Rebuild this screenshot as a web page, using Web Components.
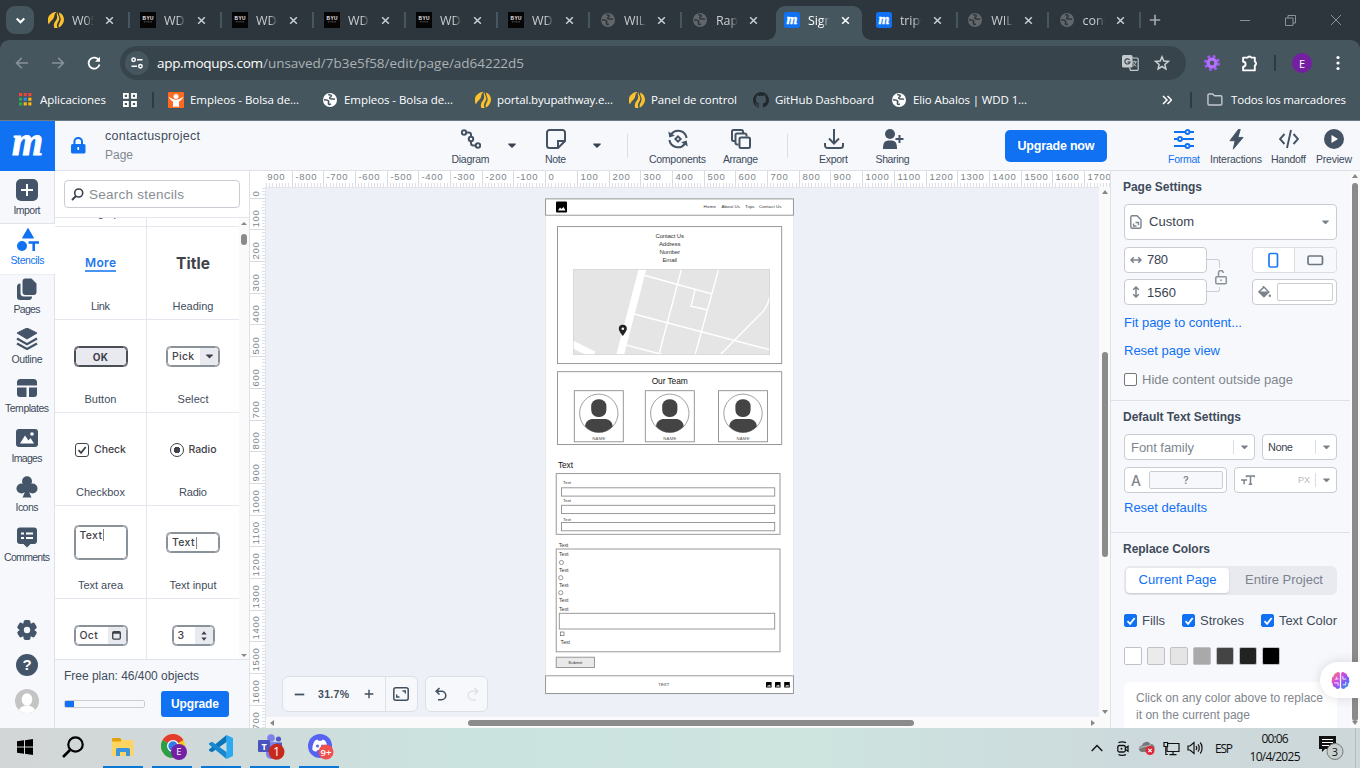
<!DOCTYPE html>
<html lang="es">
<head>
<meta charset="utf-8">
<title>contactusproject</title>
<style>
html,body{margin:0;height:100%;overflow:hidden}
body{font-family:"Liberation Sans",Arial,sans-serif;color:#3f4d5c}
</style>
</head>
<body>
<desktop-view></desktop-view>
<script>
const define = (name, css, html) => customElements.define(name, class extends HTMLElement {
  connectedCallback() {
    if (this.shadowRoot) return;
    const t = document.createElement('template');
    t.innerHTML = `<style>*{box-sizing:border-box}${css}</style>` + (typeof html === 'function' ? html(this) : html);
    this.attachShadow({mode: 'open'}).append(t.content.cloneNode(true));
  }
});
const at = (el, n, d = '') => el.getAttribute(n) ?? d;

/* Single-line label; "w" sets its width by letter spacing. */
customElements.define('ui-label', class extends HTMLElement {
  connectedCallback() {
    if (this.shadowRoot) return;
    this.attachShadow({mode: 'open'}).innerHTML = '<style>:host{display:inline-block;white-space:nowrap;flex:none}</style><slot></slot>';
    const w = +this.getAttribute('w');
    if (w) queueMicrotask(() => {
      const cur = this.getBoundingClientRect().width, n = this.textContent.length;
      const ls = (w - cur) / Math.max(1, n - 1);
      this.style.letterSpacing = ls + 'px';
      this.style.marginRight = -ls + 'px';
    });
  }
});

const S = 'fill="none" stroke="currentColor"';
const icons = {
  chevdown: ['0 0 12 12', `<path d="M2.5 4.2L6 7.7l3.500-3.500" ${S} stroke-width="1.900"/>`],
  close: ['0 0 10 10', `<path d="M1.300 1.300l7.400 7.400M8.700 1.300L1.300 8.700" ${S} stroke-width="1.700"/>`],
  plus: ['0 0 12 12', `<path d="M6 .8v10.400M.8 6h10.400" ${S} stroke-width="1.700"/>`],
  minus: ['0 0 12 12', `<path d="M.8 6h10.400" ${S} stroke-width="1.900"/>`],
  path: ['0 0 16 16', `<path d="M1 12.500A8 8 0 0 1 3.500 1.500C5 .3 7 0 8.800 0 5.500 2 7 4.500 5 7 3.500 9 1.500 10 1 12.500z" fill="#fdc12c"/><path d="M9.800 0C7.300 2.500 10.500 4 8.500 7.500 7 10 5 11.500 6.300 16h3.400C7.500 12 11 9.500 11.300 7 11.700 4 8.800 2.500 9.800 0z" fill="#fdc12c"/><path d="M11.200.6c4 1.500 5.300 5.700 4.600 8.700-.6 3-2.800 5-4.800 6.200-1.700-3 1.700-5 1.700-8.200 0-2.500-2-4-1.500-6.700z" fill="#fdc12c"/>`],
  byu: ['0 0 16 16', `<rect width="16" height="16" fill="#050505"/><path d="M4 9.800h8" stroke="#666" stroke-width=".9" stroke-dasharray="1 .4"/><text x="8" y="8" font-family="Liberation Sans" font-weight="700" font-size="4.800" fill="#eee" text-anchor="middle" textLength="11">BYU</text>`],
  globe: ['0 0 16 16', `<circle cx="8" cy="8" r="7" fill="currentColor"/><path d="M6.200 2.500c1 .3 2.800.2 3.200 1.200.3 1-1.400 1.300-1.700 2.200-.2.900 1.200.9 2 1.100 1.100.3 2.300-.4 3.300.4" fill="none" stroke="var(--hole,#2d363c)" stroke-width="1.500"/><path d="M2 7.700c1.500 0 3.800.2 4.600 1.500.6 1-.6 1.800-.1 2.700.4.800 1.500.6 2.400.2" fill="none" stroke="var(--hole,#2d363c)" stroke-width="1.600"/>`],
  moq: ['0 0 16 16', `<rect width="16" height="16" rx="2.500" fill="#1071f2"/><text x="8" y="11.800" font-family="Liberation Serif" font-style="italic" font-weight="700" font-size="14" fill="#fff" stroke="#fff" stroke-width=".4" text-anchor="middle">m</text>`],
  back: ['0 0 14 14', `<path d="M13 7H1.800M6.800 1.800L1.600 7l5.200 5.200" ${S} stroke-width="1.600"/>`],
  fwd: ['0 0 14 14', `<path d="M1 7h11.200M7.200 1.800L12.400 7l-5.200 5.200" ${S} stroke-width="1.600"/>`],
  reload: ['0 0 14 14', `<path d="M12 4.500A5.500 5.500 0 1 0 12.500 8.500" ${S} stroke-width="1.800"/><path d="M13 .8v5H8z" fill="currentColor"/>`],
  tune: ['0 0 14 14', `<g ${S} stroke-width="1.500"><circle cx="3.600" cy="3.800" r="1.700"/><path d="M7 3.800h5.500M1.500 10.200H7"/><circle cx="10.400" cy="10.200" r="1.700"/></g>`],
  translate: ['0 0 17 16', `<rect x="0" y="0" width="10.500" height="12.500" rx="1.500" fill="#c4c9cc"/><path d="M7.600 4.900A2.600 2.600 0 1 0 8 7H5.500" fill="none" stroke="#38444b" stroke-width="1.200"/><path d="M10 3h5a1.200 1.200 0 0 1 1.200 1.200v10a1.200 1.200 0 0 1-1.200 1.200H8.500L7.500 12.500" fill="none" stroke="#c4c9cc" stroke-width="1.200"/><path d="M9.800 6.800h5M12.300 5.600v1.200M13.800 7c-.4 2-1.800 3.700-3.300 4.500M10.800 7.500c.6 1.700 1.900 3 3.600 3.800" fill="none" stroke="#c4c9cc" stroke-width=".9"/>`],
  star: ['0 0 16 16', `<path d="M8 1.800l1.800 4.200 4.500.4-3.400 3 1 4.500L8 11.500l-3.900 2.400 1-4.500-3.400-3 4.500-.4z" ${S} stroke-width="1.500"/>`],
  purple: ['0 0 16 16', `<circle cx="8" cy="8" r="6.500" fill="none" stroke="#a259f5" stroke-width="3" stroke-dasharray="2.600 2.505"/><circle cx="8" cy="8" r="3.900" fill="none" stroke="#b370fa" stroke-width="3.200"/>`],
  puzzle: ['0 0 16 16', `<path d="M2 2.500h4.200a2 1.800 0 0 1 3.600 0H13v3.800a1.800 1.900 0 0 1 0 3.600v4.600H2v-3.600a2.300 2.300 0 0 0 0-4.600z" ${S} stroke-width="1.800" stroke-linejoin="round"/>`],
  dots: ['0 0 4 16', `<g fill="currentColor"><circle cx="2" cy="2.500" r="1.600"/><circle cx="2" cy="8" r="1.600"/><circle cx="2" cy="13.500" r="1.600"/></g>`],
  apps: ['0 0 14 14', ['#f0463a','#f0463a','#f0463a','#2da94f','#2d8cf0','#f9b90e','#2da94f','#f9b90e','#f9b90e'].map((c,i)=>`<rect x="${i%3*5}" y="${(i/3|0)*5}" width="3.400" height="3.400" fill="${c}"/>`).join('')],
  squares: ['0 0 14 14', `<g ${S} stroke-width="1.800"><path d="M.9.9h4v4h-4zM9 .9h4v4H9zM.9 9h4v4h-4zM9 9h4v4H9z"/></g>`],
  orange: ['0 0 16 16', `<rect width="16" height="16" rx="1" fill="#ff6a22"/><circle cx="8" cy="4.600" r="2.500" fill="#fff"/><path d="M.8 4.500C3 6 5 7.800 8 7.800s5-1.800 7.200-3.300c-.6 2.500-2.500 4-4.200 5V15c-2-.8-4-.8-6 0V9.500C3.300 8.500 1.400 7 .8 4.500z" fill="#fff"/>`],
  github: ['0 0 16 16', `<path fill="#22292e" d="M8 0a8 8 0 0 0-2.500 15.600c.4.100.5-.2.500-.4v-1.400c-2.200.5-2.700-1-2.700-1-.4-.9-.9-1.200-.9-1.200-.7-.5.100-.5.100-.5.800.1 1.200.8 1.200.8.700 1.200 1.900.9 2.300.7.100-.5.300-.9.500-1.100-1.800-.2-3.600-.9-3.600-4 0-.9.300-1.600.8-2.100-.1-.2-.4-1 .1-2.100 0 0 .7-.2 2.200.8a7.500 7.500 0 0 1 4 0c1.500-1 2.200-.8 2.200-.8.400 1.100.1 1.900.1 2.100.5.600.8 1.300.8 2.100 0 3.100-1.900 3.800-3.700 4 .3.200.6.700.6 1.500v2.200c0 .2.100.5.500.4A8 8 0 0 0 8 0z"/>`],
  dbl: ['0 0 10 10', `<path d="M1 1l4 4-4 4M5.500 1l4 4-4 4" ${S} stroke-width="1.500"/>`],
  folder: ['0 0 17 14', `<path d="M1 2.500C1 1.700 1.500 1 2.300 1H6l2 2h6.500c.8 0 1.300.6 1.300 1.300v7c0 .8-.5 1.400-1.300 1.400H2.300C1.500 12.700 1 12.100 1 11.300z" fill="none" stroke="#c3c9cd" stroke-width="1.500"/>`],
  lock: ['0 0 15 17', `<rect x="0" y="7" width="14.500" height="9.500" rx="1.500" fill="#1071f2"/><path d="M3.400 7.500V4.500a3.800 3.600 0 0 1 7.600 0v3" fill="none" stroke="#1071f2" stroke-width="2"/><rect x="6.400" y="10" width="1.700" height="3" fill="#fff"/>`],
  search: ['0 0 13 13', `<circle cx="7.700" cy="5" r="4" ${S} stroke-width="1.600"/><path d="M5 8L1 12" ${S} stroke-width="2"/>`],
  import: ['0 0 22 22', `<rect width="22" height="22" rx="5" fill="currentColor"/><path d="M11 5v12M5 11h12" stroke="#fff" stroke-width="2"/>`],
  stencils: ['0 0 22 24', `<path d="M11 .5l5.500 9.500h-11z" fill="currentColor" stroke="currentColor" stroke-linejoin="round"/><circle cx="5" cy="18" r="5" fill="currentColor"/><path d="M11.500 14.500H22M16.700 14.500V23" ${S} stroke-width="2.600"/>`],
  pages: ['0 0 22 22', `<path d="M4.500 5.500v9.500a3.500 3.500 0 0 0 3.500 3.500h8c0 2-1 3.500-3 3.500H4a3 3 0 0 1-3-3V8.500a3 3 0 0 1 3.500-3z" fill="currentColor"/><path d="M9.500.5h6l5 5V14a3 3 0 0 1-3 3h-8a3 3 0 0 1-3-3V3.500a3 3 0 0 1 3-3z" fill="currentColor"/>`],
  outline: ['0 0 22 22', `<path d="M11 0l10 5-10 6L1 5z" fill="currentColor" stroke="currentColor" stroke-linejoin="round"/><path d="M1 10.500l10 5.700 10-5.700M1 15.500l10 5.500 10-5.500" ${S} stroke-width="2.300"/>`],
  templates: ['0 0 22 22', `<path d="M1 8.500V4.500a3 3 0 0 1 3-2.500h14a3 3 0 0 1 3 2.500v4zM1 10.500h9.500V20H4a3 3 0 0 1-3-3zM13 10.500h8V17a3 3 0 0 1-3 3h-5z" fill="currentColor"/>`],
  images: ['0 0 22 22', `<rect y="2" width="22" height="18" rx="3" fill="currentColor"/><path d="M4 16.500l5-8 3.500 5 2-2.500 3.500 5.500z" fill="#fff"/><circle cx="16" cy="7" r="1.800" fill="#fff"/>`],
  icons: ['0 0 22 22', `<g fill="currentColor"><circle cx="11" cy="5.200" r="5"/><circle cx="5.500" cy="12.500" r="5"/><circle cx="16.500" cy="12.500" r="5"/><path d="M9 10h4l.5 7 2 4.500h-9l2-4.500z"/></g>`],
  comments: ['0 0 22 22', `<path d="M4 1.500h14a3 3 0 0 1 3 3v10.500a3 3 0 0 1-3 3h-3.500L11 21.500 7.500 18H4a3 3 0 0 1-3-3V4.500a3 3 0 0 1 3-3z" fill="currentColor"/><path d="M5 7.500h3M10 7.500h7M5 12h3M10 12h7" stroke="#fff" stroke-width="2"/>`],
  gear: ['0 0 22 22', `<g fill="currentColor"><circle cx="11" cy="11" r="7.500"/><rect x="7.500" y="1" width="7" height="20" rx="2"/><rect x="7.500" y="1" width="7" height="20" rx="2" transform="rotate(60 11 11)"/><rect x="7.500" y="1" width="7" height="20" rx="2" transform="rotate(120 11 11)"/></g><circle cx="11" cy="11" r="3.200" fill="#f7f8fb"/>`],
  avatar: ['0 0 24 24', `<clipPath id="c"><circle cx="12" cy="12" r="12"/></clipPath><g clip-path="url(#c)"><rect width="24" height="24" fill="#c4c4c4"/><ellipse cx="12" cy="10.500" rx="5.300" ry="6.300" fill="#fff"/><ellipse cx="12" cy="22" rx="8" ry="5.500" fill="#fff"/></g>`],
  diagram: ['0 0 20 20', `<g ${S} stroke-width="2"><circle cx="3" cy="3.500" r="2.200"/><circle cx="10" cy="10" r="2.200"/><circle cx="17" cy="16.500" r="2.200"/><path d="M5.500 3.500h2c1.700 0 2.500 1 2.500 2.300v2M10 12.200v2c0 1.500 1 2.300 2.500 2.300h2"/></g>`],
  note: ['0 0 20 20', `<path d="M3.500 1h13A2.500 2.500 0 0 1 19 3.500V12l-7 7H3.500A2.500 2.500 0 0 1 1 16.500v-13A2.500 2.500 0 0 1 3.500 1zM12 18.500V12h6.500" ${S} stroke-width="2"/>`],
  caret: ['0 0 8 5', `<path d="M.3.500h7.400v1L4 5 .3 1.500z" fill="currentColor"/>`],
  components: ['0 0 20 20', `<path d="M3.200 5.200A8.600 8.600 0 0 1 18.600 9M16.800 14.800A8.600 8.600 0 0 1 1.400 11" ${S} stroke-width="2"/><path d="M.3 2.500l1 6 5.500-1.800zM19.700 17.500l-1-6-5.500 1.800z" fill="currentColor"/><path d="M10 7.300l2.700 2.700-2.700 2.700L7.300 10z" ${S} stroke-width="1.900"/>`],
  arrange: ['0 0 20 20', `<g ${S} stroke-width="2"><path d="M4 12H2.500A1.500 1.500 0 0 1 1 10.500v-8A1.500 1.500 0 0 1 2.500 1h8A1.500 1.500 0 0 1 12 2.500V4M7.500 15.500H6A1.500 1.500 0 0 1 4.500 14V6A1.500 1.500 0 0 1 6 4.500h8A1.500 1.500 0 0 1 15.500 6v1.500"/><rect x="8.500" y="8.500" width="10.500" height="10.500" rx="1.500"/></g>`],
  export: ['0 0 20 20', `<path d="M10 0v14M5 9.500l5 5 5-5M1 14v2.500A2.500 2.500 0 0 0 3.500 19h13a2.500 2.500 0 0 0 2.500-2.500V14" ${S} stroke-width="2"/>`],
  sharing: ['0 0 22 20', `<g fill="currentColor"><circle cx="8" cy="5" r="5"/><path d="M1 20c0-6 1-8.500 7-8.500S15 14 15 20z"/></g><path d="M17.500 6v8M13.500 10h8" ${S} stroke-width="2"/>`],
  format: ['0 0 20 20', `<g ${S} stroke-width="1.900"><path d="M0 3h11M16 3h4M0 10h3.500M8.500 10H20M0 17h11M16 17h4"/><circle cx="13.500" cy="3" r="2"/><circle cx="6" cy="10" r="2"/><circle cx="13.500" cy="17" r="2"/></g>`],
  bolt: ['0 0 16 22', `<path d="M10 .5L1 12.500h5.500L4.500 21.500 15 9H9.500L12 .5z" fill="currentColor" stroke="currentColor" stroke-linejoin="round"/>`],
  handoff: ['0 0 20 20', `<path d="M5.500 5L1 10l4.500 5M14.500 5l4.500 5-4.500 5M12 1L8 19" ${S} stroke-width="1.900"/>`],
  preview: ['0 0 20 20', `<circle cx="10" cy="10" r="10" fill="currentColor"/><path d="M7.500 6l6.500 4-6.500 4z" fill="#fff"/>`],
  pagesz: ['0 0 12 14', `<path d="M2.300.8h4.700l4 4v6.900c0 .8-.6 1.500-1.500 1.500H2.300C1.500 13.200.8 12.500.8 11.700v-9.400C.8 1.500 1.500.8 2.300.8z" ${S} stroke-width="1.400"/><path d="M5.500 7.500H8.500v2.700M6.500 11H3.500V8.500" ${S} stroke-width="1.300"/>`],
  hor: ['0 0 12 8', `<path d="M1 4h10M3.800 1.200L1 4l2.800 2.800M8.200 1.200L11 4 8.200 6.800" ${S} stroke-width="1.500"/>`],
  ver: ['0 0 8 12', `<path d="M4 1v10M1.200 3.700L4 1l2.800 2.700M1.200 8.300L4 11l2.800-2.700" ${S} stroke-width="1.500"/>`],
  unlock: ['0 0 14 15', `<rect x="1.800" y="6.700" width="10.500" height="7" rx="1" ${S} stroke-width="1.500"/><path d="M4.500 6.500V3.500a2 2.300 0 0 1 4.800-.5M7 9.500v1.500" ${S} stroke-width="1.500"/>`],
  bucket: ['0 0 12 11', `<path d="M5 .5l5 5-4.500 4.500L.8 5.500 5 1.500zM2 5.800h6.500" fill="none" stroke="currentColor" stroke-width="1.300"/><path d="M1.500 6h8l-4 4z" fill="currentColor"/><circle cx="10.900" cy="9" r="1.100" fill="currentColor"/>`],
  tt: ['0 0 14 10', `<path d="M5.500 2.200V.9h8v1.300M9.500 1v8.200M7.800 9.300h3.400M.8 5.800V4.900h4.600v.9M3.100 5v4.300" ${S} stroke-width="1.500"/>`],
  brain: ['0 0 20 20', `<linearGradient id="g" x1="0" y1="0" x2="1" y2="1"><stop offset="0" stop-color="#ff8a3c"/><stop offset=".35" stop-color="#d94bdc"/><stop offset=".65" stop-color="#7b5cf5"/><stop offset="1" stop-color="#22aef5"/></linearGradient><path fill="url(#g)" d="M9.300 2v16c-1.800 1.500-4 .9-4.700-.8-2-.2-3.200-2-2.700-3.800C.6 12.500.3 10.800 1 9.500.5 7.500 1.400 6 2.800 5.500 3 3.500 4 2.300 5.600 2 6.500.7 8.500.8 9.300 2zM10.700 2v16c1.800 1.500 4 .9 4.700-.8 2-.2 3.200-2 2.700-3.800 1.300-.9 1.600-2.600.9-3.900.5-2-.4-3.500-1.800-4C17 3.500 16 2.300 14.400 2c-.9-1.300-2.900-1.200-3.700 0z"/><path d="M4 8.500h4M6 6v2.500M3.500 12.500h4v3M12.500 5.500v3h3.500M12.500 14.500h3v-3" fill="none" stroke="#fff" stroke-width=".9"/>`],
  fit: ['0 0 16 14', `<rect x=".8" y=".8" width="14.400" height="12.400" rx="2" ${S} stroke-width="1.500"/><path d="M9.500 4h2.800v2.500M3.700 7.500V10h2.800" ${S} stroke-width="1.400"/>`],
  undo: ['0 0 12 14', `<path d="M4.500 1L1.200 4.200l3.300 3.300M1.500 4.200h5a4.300 4.300 0 0 1 0 8.600H3" ${S} stroke-width="1.600"/>`],
  redo: ['0 0 12 14', `<path d="M7.500 1l3.300 3.200-3.300 3.300M10.500 4.200h-5a4.300 4.300 0 0 0 0 8.600H9" ${S} stroke-width="1.300"/>`],
  win: ['0 0 16 16', `<path d="M0 2.300L7 1.300v6.200H0zM8 1.200L16 0v7.500H8zM0 8.500h7v6.200l-7-1zM8 8.500h8V16l-8-1.200z"/>`],
  wsearch: ['0 0 22 22', `<circle cx="13.500" cy="8.500" r="7.200" fill="none" stroke="#000" stroke-width="2.200"/><path d="M8 14L1 21" stroke="#000" stroke-width="2.600"/>`],
  files: ['0 0 22 18', `<path d="M0 1.500C0 .6.600 0 1.500 0H8l1.500 2H20a1.500 1.500 0 0 1 1.500 1.500V18H0z" fill="#fcd462"/><path d="M0 1.500C0 .6.600 0 1.500 0H8l1.500 1.700-1 1.800H0z" fill="#e0a008"/><path d="M4 18v-6.500A1.500 1.500 0 0 1 5.500 10h11a1.500 1.500 0 0 1 1.500 1.500V18h-4v-4H8v4z" fill="#3a95dd"/>`],
  chrome: ['0 0 26 26', `<circle cx="12" cy="12" r="12" fill="#f9c81e"/><path d="M12 12L1.600 6A12 12 0 0 1 22.400 6z" fill="#e33b2e"/><path d="M12 12l-10.400-6A12 12 0 0 0 12 24l5-9z" fill="#2a9e49"/><circle cx="12" cy="12" r="6" fill="#fff"/><circle cx="12" cy="12" r="4.700" fill="#2f7de9"/><circle cx="18" cy="18" r="8" fill="#751fa5"/><text x="18" y="21.300" font-size="9.500" font-family="Open Sans" text-anchor="middle" fill="#fff">E</text>`],
  vscode: ['0 0 24 24', `<path d="M17.500 0L24 3v18l-6.500 3z" fill="#29aaf2"/><path d="M17.500 0v7L3 17.300 0 15.700v-1.200z" fill="#0b73b8"/><path d="M0 8.300L3 6.700 17.500 17v7L0 9.500z" fill="#1588cf"/>`],
  teams: ['0 0 27 26', `<circle cx="13" cy="4" r="3.800" fill="#7b83eb"/><circle cx="20.500" cy="5" r="2.600" fill="#5059c9"/><path d="M8 8h10v12a5 5 0 0 1-10 0z" fill="#7b83eb"/><path d="M18 8.500h6V16l-6 4z" fill="#5059c9"/><rect y="6" width="12" height="12" rx="1" fill="#4b53bc"/><text x="6" y="15.500" font-size="9" font-weight="700" font-family="Open Sans" text-anchor="middle" fill="#fff">T</text><circle cx="18.500" cy="17.800" r="8" fill="#c8291d"/><text x="18.500" y="22.300" font-size="12.500" font-family="Open Sans" text-anchor="middle" fill="#fff">1</text>`],
  discord: ['0 0 26 26', `<circle cx="12" cy="12" r="12" fill="#5662f0"/><path d="M7 6.500l2.500-1 .8 1.200h3.400l.8-1.200 2.500 1c2 3 3 6.500 2.500 9.500-1.500 1-2.500 1.500-4 1.500l-1-1.500h-5l-1 1.500c-1.500 0-2.500-.5-4-1.500C4 13 5 9.500 7 6.500z" fill="#fff"/><circle cx="9.500" cy="12" r="1.500" fill="#5662f0"/><circle cx="14.500" cy="12" r="1.500" fill="#5662f0"/><circle cx="18" cy="18" r="7.500" fill="#f0504f"/><text x="18" y="21.500" font-size="9.500" font-weight="600" font-family="Open Sans" text-anchor="middle" fill="#fff">9+</text>`],
  up: ['0 0 12 8', `<path d="M.7 7L6 1.500 11.300 7" fill="none" stroke="#111" stroke-width="1.400"/>`],
  cam: ['0 0 12 15', `<g fill="none" stroke="#111" stroke-width="1.300"><rect x=".8" y="4.500" width="7.500" height="6.500" rx="1.500"/><path d="M8.500 7l2.500-1.700v5L8.500 8.500M1.500 1.700C3 .6 7.500.6 9 1.700M1.500 13.500c1.500 1.100 6 1.100 7.500 0"/></g><circle cx="4.500" cy="7.700" r="1" fill="#111"/>`],
  cloud: ['0 0 17 14', `<path d="M3.500 11a3.300 3.300 0 0 1 .3-6.500A4.800 4.800 0 0 1 12.500 3a4 4 0 0 1 2 7.500z" fill="#777"/><path d="M.8 8C3 4 8 7 13 3.500" stroke="#aaa" stroke-width="1.500" fill="none"/><circle cx="12" cy="9.500" r="4.500" fill="#e02733"/><path d="M10.300 7.800l3.400 3.400M13.700 7.800l-3.400 3.400" stroke="#fff" stroke-width="1.200"/>`],
  net: ['0 0 17 15', `<g fill="none" stroke="#111" stroke-width="1.200"><path d="M5 2.500h11v8H4V6M10 10.500v3M6.500 13.700h7"/><path d="M1 1.500h3.600v4H1zM2.800 5.500v8h2"/></g>`],
  sound: ['0 0 17 14', `<g fill="none" stroke="#111" stroke-width="1.200"><path d="M1 5v4h2l4 3.500v-11L3 5zM9 5c.8 1 .8 3 0 4M11 3.300c1.700 2 1.700 5.400 0 7.400M13.200 1.500c2.500 3 2.500 8 0 11"/></g>`],
  notif: ['0 0 25 24', `<path d="M0 0h17v13H6l-3 3v-3H0z" fill="#111"/><path d="M3 3.500h11M3 6.500h11M3 9.500h7" stroke="#fff"/><circle cx="16" cy="15.500" r="8" fill="#c8cfcf" stroke="#777"/><text x="16" y="19.500" font-size="11" font-family="Open Sans" text-anchor="middle" fill="#111">3</text>`],
  cal: ['0 0 10 10', `<rect x=".8" y=".8" width="8.400" height="8.200" rx="1.200" ${S} stroke-width="1.500"/><path d="M1 2h8" ${S} stroke-width="2"/>`],
  spin: ['0 0 6 10', `<path d="M3 .3l2.700 3.200H.3zM3 9.700l2.700-3.200H.3z" fill="currentColor"/>`],
  check: ['0 0 10 10', `<path d="M1.500 5.200l2.600 2.600L8.700 2" ${S} stroke-width="1.800"/>`],
  min: ['0 0 10 10', `<path d="M0 5.500h10" ${S}/>`],
  restore: ['0 0 11 11', `<path d="M.5 3h7.500v7.500H.5zM3 3V.5h7.500V8H8" ${S}/>`],
  x2: ['0 0 10 10', `<path d="M0 0l10 10M10 0L0 10" ${S}/>`]
};
define('ui-icon', ':host{display:block;flex:none}svg{display:block}', el => {
  const [vb, body] = icons[at(el, 'name')], w = +at(el, 'w', 16), v = vb.split(' ');
  return `<svg width="${w}" height="${w * v[3] / v[2]}" viewBox="${vb}">${body}</svg>`;
});

/* ---------- browser frame ---------- */
define('browser-tab', `
:host{display:block;width:92px;height:34px;flex:none;color:#c9ced2;position:relative;font:12.500px "Open Sans",sans-serif}
.t{display:flex;align-items:center;height:34px;width:86px;padding:0 8px 6px 8px}
.n{width:22px;margin-left:8px;overflow:hidden;white-space:nowrap;letter-spacing:-.1px;-webkit-mask-image:linear-gradient(90deg,#000 60%,transparent)}
.x{margin-left:11px}
:host([sep])::after{content:"";position:absolute;left:88px;top:6px;width:2px;height:16px;background:#46575f}
:host([active]) .t{background:#45565f;border-radius:9px 9px 0 0;color:#fff}
:host([active]) .t::before,:host([active]) .t::after{content:"";position:absolute;bottom:0;width:9px;height:9px;left:-9px;background:radial-gradient(circle at 0 0,transparent 8.500px,#45565f 9px)}
:host([active]) .t::after{left:86px;background:radial-gradient(circle at 100% 0,transparent 8.500px,#45565f 9px)}
ui-icon[name=globe]{color:#62676b}
`, el => `<div class="t"><ui-icon name="${at(el,'icon')}"></ui-icon><span class="n"><slot></slot></span><ui-icon class="x" name="close" w="9"></ui-icon></div>`);

define('tab-strip', `
:host{display:flex;height:40px;padding:6px 0 0 6px;background:#2d363c;color:#d0d4d7}
.d{width:28px;height:28px;border-radius:9px;background:#45565f;display:grid;place-items:center;color:#fff;margin-right:6px}
.late{width:91.300px}
.p{margin:8px 0 0 7px;color:#a1a7ab}
.w{display:flex;margin-left:auto;color:#8b9196;padding:9px 19px 0 0;gap:35px}
`, `<div class="d"><ui-icon name="chevdown" w="13"></ui-icon></div>
<browser-tab icon="path" sep>W05 Assign</browser-tab><browser-tab icon="byu" sep>WDD 130</browser-tab><browser-tab icon="byu" sep>WDD 130</browser-tab><browser-tab icon="byu" sep>WDD 130</browser-tab><browser-tab icon="byu" sep>WDD 130</browser-tab><browser-tab icon="byu" sep>WDD 130</browser-tab><browser-tab icon="globe" sep>WILD</browser-tab><browser-tab icon="globe">Rapids</browser-tab><browser-tab icon="moq" active>Sign up</browser-tab><browser-tab class="late" icon="moq" sep>trips</browser-tab><browser-tab class="late" icon="globe" sep>WILD</browser-tab><browser-tab class="late" icon="globe" sep>contact</browser-tab>
<ui-icon class="p" name="plus" w="12"></ui-icon>
<div class="w"><ui-icon name="min" w="10"></ui-icon><ui-icon name="restore" w="11"></ui-icon><ui-icon name="x2" w="10"></ui-icon></div>`);

define('address-bar', `
:host{display:flex;align-items:center;height:46px;background:#45565f;padding-left:15px;color:#fff;font:13.500px "Open Sans",sans-serif;border-radius:9px 9px 0 0}
.o{display:flex;align-items:center;width:1066px;height:34px;border-radius:17px;background:#38444b;margin-left:19px;padding:0 16px 0 5px}
.i{width:24px;height:24px;border-radius:50%;background:#45565f;display:grid;place-items:center;margin-right:8px}
.u{color:#aab2b7}.tr{margin-left:auto}
.s{width:2px;height:16px;background:#2f3a41;margin:0 16px}
.e{width:20px;height:20px;border-radius:50%;background:#741fa2;font-size:11px;display:grid;place-items:center;margin-right:24px}
`, `<ui-icon name="back" w="14" style="color:#87929a"></ui-icon><ui-icon name="fwd" w="14" style="color:#87929a;margin-left:22px"></ui-icon><ui-icon name="reload" w="14" style="margin-left:22px"></ui-icon>
<div class="o"><div class="i"><ui-icon name="tune" w="14"></ui-icon></div><ui-label w="106">app.moqups.com</ui-label><ui-label class="u" w="261">/unsaved/7b3e5f58/edit/page/ad64222d5</ui-label>
<ui-icon class="tr" name="translate" w="17"></ui-icon><ui-icon name="star" w="16" style="margin-left:15px;color:#c9ced1"></ui-icon></div>
<ui-icon name="purple" w="16" style="margin-left:18px"></ui-icon><ui-icon name="puzzle" w="17" style="margin-left:21px"></ui-icon><div class="s"></div><div class="e">E</div><ui-icon name="dots" w="4"></ui-icon>`);

define('bookmark-item', `:host{display:flex;align-items:center;flex:none}ui-icon{margin-right:var(--gap,6px)}`, el => `<ui-icon name="${at(el,'icon')}" w="${at(el,'s','16')}"></ui-icon><ui-label w="${at(el,'w')}">${at(el,'label')}</ui-label>`);
define('bookmark-bar', `
:host{display:flex;align-items:center;height:35px;padding:0 0 7px 19px;background:#45565f;border-bottom:1px solid #6d7b84;color:#fff;font:11.500px "Open Sans",sans-serif;--hole:#45565f;box-sizing:border-box}
bookmark-item{margin-right:22px}.s{width:2px;height:16px;background:#2f3a41}
`, `<bookmark-item icon="apps" s="13" w="66" label="Aplicaciones" style="margin-right:17px;--gap:8px"></bookmark-item><ui-icon name="squares" w="14"></ui-icon><div class="s" style="margin:0 14px 0 15px"></div>
<bookmark-item icon="orange" w="109" label="Empleos - Bolsa de..." style="margin-right:23px"></bookmark-item><bookmark-item icon="globe" w="109" label="Empleos - Bolsa de..."></bookmark-item><bookmark-item icon="path" w="116" label="portal.byupathway.e..." style="margin-right:16px"></bookmark-item><bookmark-item icon="path" w="86" label="Panel de control" style="margin-right:16px"></bookmark-item><bookmark-item icon="github" w="99" label="GitHub Dashboard" style="margin-right:17px"></bookmark-item><bookmark-item icon="globe" w="114" label="Elio Abalos | WDD 1..."></bookmark-item>
<ui-icon name="dbl" w="10" style="margin-left:auto"></ui-icon><div class="s" style="margin:0 15px 0 18px"></div><bookmark-item icon="folder" w="115" label="Todos los marcadores" style="margin-right:14px;--gap:8px"></bookmark-item>`);

/* ---------- application header ---------- */
define('mq-tool', `
:host{display:flex;flex-direction:column;align-items:center;flex:none;height:49px;padding-top:8px;font-size:10.500px;line-height:13px;color:#3c4a5b}
.i{height:20px;display:grid;place-items:center;margin-bottom:4px;color:#445364}:host([active]),:host([active]) .i{color:#1071f2}
`, el => `<div class="i"><ui-icon name="${at(el,'icon')}" w="${at(el,'s','20')}"></ui-icon></div><ui-label w="${at(el,'w')}">${at(el,'label')}</ui-label>`);
define('mq-header', `
:host{display:flex;height:50px;background:#f7f8fb;border-bottom:1px solid #dfe0e8;box-sizing:border-box;padding-right:4px}
.logo{width:55px;height:50px;background:#1071f2;flex:none;text-align:center;color:#fff;font:italic 700 40px/42px "Liberation Serif",serif;-webkit-text-stroke:.9px #fff}
.l{margin:16px 19px 0 16px}
.n{width:335.500px;font-size:12.500px;line-height:19px;padding-top:6px}.n ui-label{display:block;width:max-content}
.pg{color:#7f8994;font-size:12px}
.c{margin-top:22px;color:#36424f}.sep{width:1px;height:24px;margin-top:13px;background:#dcdee5}
.b{width:102px;height:32px;border-radius:5px;background:#1071f2;color:#fff;font-weight:700;font-size:12.500px;line-height:14px;display:grid;place-items:center;margin:9px 52px 0 87.500px;padding-bottom:1px}
`, `<div class="logo">m</div><ui-icon class="l" name="lock" w="15"></ui-icon><div class="n"><ui-label w="95">contactusproject</ui-label><ui-label class="pg" w="28">Page</ui-label></div>
<mq-tool icon="diagram" label="Diagram" w="38" style="width:60px"></mq-tool><ui-icon class="c" name="caret" w="8" style="margin-left:7px"></ui-icon>
<mq-tool icon="note" label="Note" w="21" style="width:50px;margin-left:15px"></mq-tool><ui-icon class="c" name="caret" w="8" style="margin-left:12px"></ui-icon>
<div class="sep" style="margin-left:26px"></div><mq-tool icon="components" label="Components" w="57" style="width:64px;margin-left:18px"></mq-tool><mq-tool icon="arrange" label="Arrange" w="35" style="width:50px;margin-left:6px"></mq-tool>
<div class="sep" style="margin-left:21px"></div><mq-tool icon="export" label="Export" w="29" style="width:50px;margin-left:21px"></mq-tool><mq-tool icon="sharing" s="22" label="Sharing" w="34" style="width:50px;margin-left:9px"></mq-tool>
<div class="b"><ui-label w="77">Upgrade now</ui-label></div>
<mq-tool active icon="format" label="Format" w="32" style="width:50px"></mq-tool><mq-tool icon="bolt" s="15" label="Interactions" w="52" style="width:54px"></mq-tool><mq-tool icon="handoff" label="Handoff" w="35" style="width:51px"></mq-tool><mq-tool icon="preview" label="Preview" w="36" style="width:40px"></mq-tool>`);

/* ---------- left side ---------- */
define('rail-item', `
:host{display:flex;flex-direction:column;align-items:center;height:49.500px;padding-top:3.500px;color:#44556a;font-size:10.500px;line-height:12px;box-sizing:border-box}
.i{height:24px;display:grid;place-items:center;margin-bottom:2px}ui-label{color:#3c4a5b}
:host([active]){background:#fff;width:55px;box-shadow:0 0 0 1px #e1e3ea;clip-path:inset(-1px 0 -1px 0)}:host([active]),:host([active]) ui-label{color:#1071f2}
`, el => `<div class="i"><ui-icon name="${at(el,'icon')}" w="22"></ui-icon></div><ui-label w="${at(el,'w')}">${at(el,'label')}</ui-label>`);
define('side-rail', `
:host{display:flex;flex-direction:column;width:55px;background:#f7f8fb;border-right:1px solid #dfe0e8;padding-top:3.500px;color:#44556a;box-sizing:border-box}
.b{display:flex;flex-direction:column;align-items:center;gap:13px;margin-top:auto;padding-bottom:15px}
.q{width:22px;height:22px;border-radius:50%;background:#44556a;color:#fff;font:700 15px/22px "Liberation Sans";text-align:center}
`, `<rail-item icon="import" label="Import" w="27"></rail-item><rail-item active icon="stencils" label="Stencils" w="34"></rail-item><rail-item icon="pages" label="Pages" w="27"></rail-item><rail-item icon="outline" label="Outline" w="31"></rail-item><rail-item icon="templates" label="Templates" w="44"></rail-item><rail-item icon="images" label="Images" w="31"></rail-item><rail-item icon="icons" label="Icons" w="23"></rail-item><rail-item icon="comments" label="Comments" w="46"></rail-item>
<div class="b"><ui-icon name="gear" w="22"></ui-icon><div class="q">?</div><ui-icon name="avatar" w="24"></ui-icon></div>`);

define('stencil-cell', `
:host{display:grid;grid-template-rows:73px 14px;justify-items:center;height:93px;border-bottom:1px solid #e6e7ee;box-sizing:border-box;font-size:11px;line-height:13px;color:#3f4d5c}
:host(:nth-child(odd)){border-right:1px solid #e6e7ee}
.p{display:grid;place-items:center;color:#3f4248;font:500 10.500px Inter,sans-serif}
`, el => `<div class="p"><slot></slot></div>${el.hasAttribute('label') ? `<ui-label w="${at(el,'w')}">${at(el,'label')}</ui-label>` : ''}`);
define('stencil-panel', `
:host{display:flex;flex-direction:column;width:195px;border-right:1px solid #dfe0e8;background:#fff;box-sizing:border-box}
.s{height:47px;padding:9px 9px 0;border-bottom:1px solid #e6e7ee;flex:none}
.f{height:28px;border:1px solid #c9ccd3;border-radius:4px;display:flex;align-items:center;padding-left:6px;color:#39424e;font-size:13.500px}
.f ui-label{margin-left:5px;color:#878d94}
.m{height:441px;display:flex;overflow:hidden;flex:none}
.g{display:grid;grid-template-columns:92px 92px;grid-auto-rows:93px;margin-top:-84px;height:600px}
.sb{flex:1;display:flex;flex-direction:column;align-items:center;padding:4px 0 2px;background:#fafafb}
.sb i{width:6px;height:11px;border-radius:3px;background:#8a8a8a;margin-top:9px}
.ar{width:0;border:3px solid transparent;border-bottom:3.500px solid #888;border-top:0}.ar.d{transform:rotate(180deg);margin-top:auto}
.ft{flex:1;background:#f7f8fb;border-top:1px solid #dfe0e8;padding:9px 9px 0;font-size:12px;line-height:14px}
.r{display:flex;align-items:center;justify-content:space-between;margin-top:8px;padding-right:11px}
.bar{width:81px;height:8px;border:1px solid #c9ccd3;border-radius:2px;background:linear-gradient(90deg,#1071f2 9px,transparent 9px)}
.up{width:68px;height:26px;border-radius:3px;background:#1071f2;color:#fff;font-weight:700;display:grid;place-items:center}
.bx{border:1.500px solid #8a9299;outline:.5px solid #8a9299;border-radius:3.500px;display:flex;overflow:hidden;box-sizing:border-box;width:52px;height:19px;align-items:center;padding-left:4px;letter-spacing:.3px}
.bx b{margin-left:auto;height:100%;width:18px;background:#e9e9f0;display:grid;place-items:center}
.bx s{width:1px;height:12px;background:#888;margin-left:1px}
.row{display:flex;align-items:center;gap:5px}
.ck{width:14px;height:14px;border:1.500px solid #3f4248;border-radius:3px;display:grid;place-items:center}
.rd{width:14px;height:14px;border:1.500px solid #3f4248;border-radius:50%;background:radial-gradient(#3f4248 3px,transparent 3.500px)}
`, `<div class="s"><div class="f"><ui-icon name="search" w="13"></ui-icon><ui-label w="95">Search stencils</ui-label></div></div>
<div class="m"><div class="g"><stencil-cell label="Paragraph" w="50"></stencil-cell><stencil-cell></stencil-cell>
<stencil-cell label="Link" w="19"><ui-label w="31" style="color:#1f78ee;font-size:12px;font-weight:600;border-bottom:2px solid #4a94f5;line-height:14px">More</ui-label></stencil-cell>
<stencil-cell label="Heading" w="41"><ui-label w="34" style="font-size:15.500px;font-weight:700">Title</ui-label></stencil-cell>
<stencil-cell label="Button" w="32"><div class="bx" style="border-color:#4a4f56;outline-color:#4a4f56;background:#e9e9f0;justify-content:center;padding:0;font-weight:700;font-size:10px">OK</div></stencil-cell>
<stencil-cell label="Select" w="31"><div class="bx">Pick<b><ui-icon name="caret" w="7"></ui-icon></b></div></stencil-cell>
<stencil-cell label="Checkbox" w="49"><div class="row"><div class="ck"><ui-icon name="check" w="10"></ui-icon></div><ui-label w="32">Check</ui-label></div></stencil-cell>
<stencil-cell label="Radio" w="28"><div class="row"><div class="rd"></div><ui-label w="28">Radio</ui-label></div></stencil-cell>
<stencil-cell label="Text area" w="45"><div class="bx" style="height:33px;align-items:flex-start;padding-top:2px">Text<s></s></div></stencil-cell>
<stencil-cell label="Text input" w="47"><div class="bx">Text<s></s></div></stencil-cell>
<stencil-cell><div class="bx">Oct<b><ui-icon name="cal" w="9"></ui-icon></b></div></stencil-cell>
<stencil-cell><div class="bx" style="width:41px">3<b><ui-icon name="spin" w="6"></ui-icon></b></div></stencil-cell>
</div><div class="sb"><span class="ar"></span><i></i><span class="ar d"></span></div></div>
<div class="ft"><ui-label w="135">Free plan: 46/400 objects</ui-label><div class="r"><div class="bar"></div><div class="up"><ui-label w="48">Upgrade</ui-label></div></div></div>`);

/* ---------- canvas ---------- */
const Z = 31.7, OX = 545.6, OY = 198.6;
const ticks = (from, to, o, draw) => { let s = ''; for (let i = Math.ceil((from - o) / Z * 10); o + i * Z / 10 < to; i++) s += draw(o + i * Z / 10, i % 10 === 0, i * 10); return s; };
define('h-ruler', ':host{display:block;height:16px;background:#fff;overflow:hidden}svg{display:block;margin-left:16px}', () =>
  `<svg width="844" height="16" viewBox="266 171 844 16" font-family="Liberation Sans" font-size="9.500" fill="#7c858d">${ticks(255, 1110, OX, (x, M, v) => {
    const X = Math.floor(x) + .5;
    return `<path d="M${X} ${M ? 171 : 183}V187" stroke="${M ? '#d9dbe3' : '#dfe0e7'}"/>` + (M ? `<text x="${X + 3}" y="180" letter-spacing=".7">${v}</text>` : '');
  })}</svg>`);
define('v-ruler', ':host{display:block;width:16px;background:#fff;overflow:hidden;border-right:1px solid #e3e5ec}svg{display:block}', () =>
  `<svg width="16" height="541" viewBox="250 187 16 541" font-family="Liberation Sans" font-size="9.500" fill="#7c858d">${ticks(187, 750, OY, (y, M, v) => {
    const Y = Math.round(y) - .5;
    return v < 0 && M ? '' : `<path d="M${M ? 250 : 262} ${Y}H266" stroke="${M ? '#d9dbe3' : '#dfe0e7'}"/>` + (M ? `<text transform="translate(259 ${Y - 2}) rotate(-90)" letter-spacing=".7">${v}</text>` : '');
  })}</svg>`);

const pic = (x, y, s) => `<g transform="translate(${x} ${y}) scale(${s / 11})"><rect width="11" height="11" rx="1"/><path d="M2 9l2-3 1.500 1.500L7.500 5.500 9.500 9z" fill="#fff"/></g>`;
const tx = (x, y, s, w, t, a = 'start', c = '#333') => `<text x="${x}" y="${y}" font-size="${s}" textLength="${w}" text-anchor="${a}" fill="${c}">${t}</text>`;
const bx = (x1, y1, x2, y2, f = 'none') => `<rect x="${x1}" y="${y1}" width="${(x2 - x1).toFixed(1)}" height="${(y2 - y1).toFixed(1)}" fill="${f}" stroke="#8e8e8e" stroke-width=".9"/>`;
const card = x => bx(x, 390.7, x + 49, 441.8) + `<circle cx="${x + 24.500}" cy="413.300" r="19.200" fill="none" stroke="#777" stroke-width=".7"/><rect x="${x + 16.900}" y="399.200" width="15.200" height="17.800" rx="7" fill="#444"/><path d="M${x + 10.800} 426.500c0-5 4-7.500 8-7.500h11.500c4 0 8 2.500 8 7.500a18.700 18.700 0 0 1-27.500 0z" fill="#444"/>` + tx(x + 24.500, 440, 4.3, 13, 'NAME', 'middle', '#555');
define('wire-frame', ':host{display:block}svg{display:block}', () => `<svg width="833" height="530" viewBox="266 187 833 530" font-family="Liberation Sans">
<rect x="545.500" y="199" width="248" height="495" fill="#fff" stroke="#dcdfe5" stroke-width=".6"/>
${bx(545.6, 198.9, 793.4, 215.2, '#fff')}${pic(556, 201.6, 11)}
${tx(703.5, 208, 4.4, 12.5, 'Home')}${tx(721.5, 208, 4.4, 18.5, 'About Us')}${tx(745, 208, 4.4, 9.500, 'Trips')}${tx(759, 208, 4.4, 22.5, 'Contact Us')}
${bx(557.5, 226.6, 781.7, 363.6)}
${tx(669.7, 238, 6, 28.5, 'Contact Us', 'middle')}${tx(669.7, 246, 6, 21.5, 'Address', 'middle')}${tx(669.7, 254, 6, 20.500, 'Number', 'middle')}${tx(669.7, 262, 6, 14.5, 'Email', 'middle')}
<svg x="573" y="269.300" width="197" height="85.400" viewBox="573 269.300 197 85.400"><rect x="573" y="269.300" width="197" height="85.400" fill="#e5e5e5"/><g fill="none" stroke="#fff" stroke-width="1.400"><path d="M642.500 269L620 355.500" stroke-width="7.500"/><path d="M572 344L594 355" stroke-width="7"/><path d="M645 275.500L712 294M634 314L771 350M626 345L662 354.500M681.500 269L658.800 355M718.700 269L695 355M695 290l-4 16.200 16 3.500M770.500 294c-1.500 8-4 14-9 19L720 355"/></g><rect x="573" y="269.300" width="197" height="85.400" fill="none" stroke="#cbcbcb"/></svg>
<path d="M622.800 336c-2.500-3.500-4-5-4-7.200a4 4 0 0 1 8 0c0 2.200-1.500 3.700-4 7.200z" fill="#222"/><circle cx="622.800" cy="328.800" r="1.300" fill="#fff"/>
${bx(557.5, 371.7, 781.7, 444.5)}${tx(669.7, 384, 8.4, 36, 'Our Team', 'middle', '#111')}
${card(574.3)}${card(645.3)}${card(718.5)}
${tx(558, 468, 8.4, 15, 'Text', 'start', '#111')}${bx(556.2, 473.6, 780, 534.3)}
${[[484, 487.8], [502, 505.3], [521, 522.5]].map(([a, b]) => tx(563, a, 4.2, 8, 'Text') + bx(561.5, b, 774.7, b + 8.3)).join('')}
${tx(558.7, 547, 5.3, 9.500, 'Text')}${bx(556.2, 549, 780, 651.8)}
${[556, 572, 587, 602, 611].map(y => tx(559, y, 5.3, 9.5, 'Text')).join('')}
${[[561.5, 562.5], [560.8, 577.7], [560.8, 592.7]].map(([x, y]) => `<circle cx="${x}" cy="${y}" r="2.100" fill="none" stroke="#555" stroke-width=".6"/>`).join('')}
${bx(559.3, 613.3, 774.7, 629)}<rect x="560.300" y="632" width="3.700" height="3.700" fill="none" stroke="#555" stroke-width=".6"/>${tx(560.6, 644, 5.3, 9.5, 'Text')}
${bx(556.2, 657.2, 594.4, 667.5, '#e9e9e9')}${tx(575.2, 664, 4.3, 14, 'Submit', 'middle')}
${bx(545.6, 675.8, 793.4, 693.5, '#fff')}${tx(663.8, 686, 4.2, 11, 'TEXT', 'middle')}${pic(766, 682, 5.6)}${pic(775, 682, 5.6)}${pic(784.2, 682, 5.6)}
</svg>`);
define('scroll-bar', `
:host{display:flex;align-items:center;justify-content:space-between;background:#fafafb;box-sizing:border-box;padding:3px 2px;flex-direction:column}
:host([h]){flex-direction:row;padding:2px 4px}
i{width:6px;border-radius:3px;background:#8b8b8b;height:var(--len);margin-top:var(--pos)}:host([h]) i{width:var(--len);height:6px;margin:0 0 0 var(--pos)}
.a{border:3px solid transparent;border-bottom:4px solid #888;border-top:0;flex:none}.z{border:3px solid transparent;border-top:4px solid #888;border-bottom:0;margin-top:auto;flex:none}
:host([h]) .a{border:3px solid transparent;border-right:4px solid #888;border-left:0}:host([h]) .z{border:3px solid transparent;border-left:4px solid #888;border-right:0;margin:0 0 0 auto}
`, '<span class="a"></span><i></i><span class="z"></span>');
define('zoom-controls', `
:host{display:flex;gap:7px;color:#414f5e}
div{height:36px;border:1px solid #dcdfe8;border-radius:6px;background:#f7f8fb;display:flex;align-items:center}
.z{width:136px;padding-left:11px;font-size:10.500px;font-weight:700}.z span{height:34px;width:1px;background:#dfe2e9;margin:0 7px 0 11px}
.u{width:63px;padding-left:9px;gap:20px}
`, `<div class="z"><ui-icon name="minus" w="11"></ui-icon><ui-label w="31" style="margin-left:13px">31.7%</ui-label><ui-icon name="plus" w="10" style="margin-left:15px"></ui-icon><span></span><ui-icon name="fit" w="16"></ui-icon></div><div class="u"><ui-icon name="undo" w="12"></ui-icon><ui-icon name="redo" w="12" style="color:#dcdfe5"></ui-icon></div>`);
define('canvas-area', `
:host{display:flex;flex-direction:column;width:860px;min-height:0}
.m{display:grid;grid-template-columns:16px 833px 11px;grid-template-rows:530px 11px;height:541px}
v-ruler{grid-row:1/3}.c{background:#edf0f6;position:relative;border-top:1px solid #e3e5ec}
wire-frame{margin-top:-1px}zoom-controls{position:absolute;left:16px;bottom:5px}.k{background:#fafafb}
`, `<h-ruler></h-ruler><div class="m"><v-ruler></v-ruler><div class="c"><wire-frame></wire-frame><zoom-controls></zoom-controls></div><scroll-bar style="--len:205px;--pos:158px"></scroll-bar><scroll-bar h style="--len:446px;--pos:194px"></scroll-bar><div class="k"></div></div>`);

/* ---------- format panel ---------- */
define('field-box', `
:host{display:flex;align-items:center;height:26px;border:1px solid #c9ccd3;border-radius:4px;background:#fff;box-sizing:border-box;padding:0 6px;font-size:13px;line-height:15px;color:#3a4350;flex:none}
`, '<slot></slot>');
define('check-box', `
:host{display:flex;align-items:center;gap:5px;font-size:13px;line-height:15px}
i{width:13px;height:13px;border-radius:2px;border:1px solid #767676;background:#fff;display:grid;place-items:center;color:#fff}
:host([on]) i{background:#1071f2;border-color:#1071f2}
`, el => `<i>${el.hasAttribute('on') ? '<ui-icon name="check" w="10"></ui-icon>' : ''}</i><ui-label w="${at(el,'w')}">${at(el,'label')}</ui-label>`);
define('format-panel', `
:host{display:flex;width:250px;background:#f7f8fb;border-left:1px solid #dfe0e8;box-sizing:border-box;overflow:hidden;position:relative}
.p{width:239px;height:557px;overflow:hidden}
section{padding:0 13px;border-bottom:1px solid #dfe0e8;box-sizing:border-box}
h3{margin:0 0 0 -1px;font-size:12px;line-height:14px;color:#3f4b5a}h3 ui-label{display:block;width:max-content}
.r{display:flex;gap:7px}.lk{display:block;color:#1071f2;font-size:13px;line-height:16px}
.g{display:grid;grid-template-columns:83px 45px 85px;grid-template-rows:26px 26px;gap:6px 0;margin-top:7px}
.lock{grid-row:1/3;grid-column:2;position:relative;color:#8b9299}
.ln{width:13px;border:1px solid #c9ccd3;border-left:0;height:33px;margin-top:12px;border-radius:0 3px 3px 0}
.lock ui-icon{position:absolute;left:7px;top:21px;background:#f7f8fb;padding:2px 0}
.seg{display:flex;padding:0;overflow:hidden;border-color:#dcdee5}.seg div{flex:1;height:100%;display:grid;place-items:center}.seg div+div{background:#f7f8fb;border-left:1px solid #dcdee5}
.v{width:1px;height:14px;background:#dcdee5;margin:0 7px 0 auto}.ct{color:#7a828a}
.sw{display:flex;gap:5px;margin-top:19px}.sw i{width:18px;height:18px;border:1px solid #bfc1c5;border-radius:2px}
.tab{display:flex;background:#e9e9f0;border-radius:6px;height:29px;padding:2px;margin-top:10px;font-size:13px;line-height:15px;color:#7a828d}
.tab div{flex:none;width:103px;height:25px;display:grid;place-items:center;padding-bottom:2px}.tab div:first-child{background:#fff;border-radius:4px;box-shadow:0 1px 2px #0002;color:#1071f2}.tab div+div{width:106px;padding-left:4px}
.card{background:#fff;border-radius:6px 6px 0 0;margin-top:17px;height:60px;padding:8px 12px;font-size:12px;line-height:17px;color:#7f868e}
scroll-bar{width:10px;flex:none}
.br{position:absolute;right:0;top:491px;width:40px;height:36px;background:#fff;border-radius:18px 0 0 18px;box-shadow:0 0 12px #0002;display:grid;place-items:center}
`, `<div class="p"><section style="height:230px;padding-top:9px"><h3><ui-label w="79">Page Settings</ui-label></h3>
<field-box style="height:36px;margin-top:10px;padding-left:5px"><ui-icon name="pagesz" w="12" style="color:#7a828a"></ui-icon><ui-label w="45" style="margin:0 0 1px 7px">Custom</ui-label><ui-icon class="ct" name="caret" w="7" style="margin-left:auto;margin-right:1px"></ui-icon></field-box>
<div class="g"><field-box style="padding-left:5px"><ui-icon name="hor" w="12" class="ct"></ui-icon><ui-label w="21" style="margin:0 0 1px 5px">780</ui-label></field-box><div class="lock"><div class="ln"></div><ui-icon name="unlock" w="14"></ui-icon></div>
<field-box class="seg"><div><svg width="11" height="17"><rect x="1" y="1.500" width="8.500" height="13.500" rx="1.500" fill="none" stroke="#1f7af0" stroke-width="1.700"/></svg></div><div><svg width="17" height="11"><rect x="1" y="1" width="14.500" height="8.500" rx="1.500" fill="none" stroke="#6c7682" stroke-width="1.700"/></svg></div></field-box>
<field-box style="padding-left:7px"><ui-icon name="ver" w="8" class="ct"></ui-icon><ui-label w="29" style="margin-left:7px">1560</ui-label></field-box>
<field-box style="grid-column:3;padding:0 3px 0 5px;justify-content:space-between"><ui-icon class="ct" name="bucket" w="13"></ui-icon><div style="width:56px;height:18px;border:1px solid #c9ccd3;border-radius:2px"></div></field-box></div>
<ui-label class="lk" w="118" style="width:max-content;margin-top:10px">Fit page to content...</ui-label><ui-label class="lk" w="96" style="width:max-content;margin-top:12px">Reset page view</ui-label>
<check-box label="Hide content outside page" w="151" style="margin-top:13px;color:#7f868e"></check-box></section>
<section style="height:132px;padding-top:9px"><h3><ui-label w="118">Default Text Settings</ui-label></h3>
<div class="r" style="margin-top:10px"><field-box style="width:131px;color:#7f868e"><ui-label w="63">Font family</ui-label><span class="v"></span><ui-icon class="ct" name="caret" w="7"></ui-icon></field-box><field-box style="width:75px;padding-left:5px"><ui-label w="25" style="font:10.500px Inter">None</ui-label><span class="v"></span><ui-icon class="ct" name="caret" w="7"></ui-icon></field-box></div>
<div class="r" style="margin-top:7px"><field-box style="width:103px;padding-right:3px;justify-content:space-between;color:#7f868e"><ui-label style="font:500 14px Inter">A</ui-label><div style="width:74px;height:18px;border:1px solid #c9ccd3;border-radius:2px;background:#f7f8fb;display:grid;place-items:center;font:600 10px Inter">?</div></field-box><field-box style="width:103px"><ui-icon class="ct" name="tt" w="14"></ui-icon><ui-label w="12" style="margin-left:auto;color:#b5babf;font-size:9px">PX</ui-label><span class="v" style="margin-left:5px"></span><ui-icon class="ct" name="caret" w="7"></ui-icon></field-box></div>
<ui-label class="lk" w="83" style="width:max-content;margin-top:7px">Reset defaults</ui-label></section>
<section style="padding-top:9px;border:0"><h3><ui-label w="87">Replace Colors</ui-label></h3>
<div class="tab"><div><ui-label w="78">Current Page</ui-label></div><div><ui-label w="78">Entire Project</ui-label></div></div>
<div class="r" style="margin-top:18px;justify-content:space-between;gap:0"><check-box on label="Fills" w="23"></check-box><check-box on label="Strokes" w="44"></check-box><check-box on label="Text Color" w="58"></check-box></div>
<div class="sw"><i style="background:#fff"></i><i style="background:#ebebeb"></i><i style="background:#e5e5e5"></i><i style="background:#a9a9a9"></i><i style="background:#444"></i><i style="background:#222"></i><i style="background:#000"></i></div>
<div class="card"><ui-label w="187">Click on any color above to replace</ui-label><br><ui-label w="114">it on the current page</ui-label></div></section></div>
<scroll-bar style="--len:538px;--pos:5px"></scroll-bar><div class="br"><ui-icon name="brain" w="19"></ui-icon></div>`);

define('moqups-app', ':host{display:block;height:607px;background:#fff;flex:none}.b{display:flex;height:557px}', '<mq-header></mq-header><div class="b"><side-rail></side-rail><stencil-panel></stencil-panel><canvas-area></canvas-area><format-panel></format-panel></div>');

/* ---------- taskbar ---------- */
define('task-button', ':host{display:grid;place-items:center;width:40px;height:40px;margin-right:9px;box-sizing:border-box;border-bottom:2px solid transparent;padding-left:var(--nudge,0)}:host([on]){border-color:#0a78d4}', el => `<ui-icon name="${at(el,'icon')}" w="${at(el,'s','24')}"></ui-icon>`);
define('task-bar', `
:host{display:flex;align-items:center;height:40px;padding-left:5px;background:linear-gradient(90deg,#d3d6d6,#d0d9da 15%,#cbe3df 33%,#cde4df 60%,#cddadd 82%,#cdd7d9);font:12px "Open Sans",sans-serif;color:#111;flex:none;box-sizing:border-box}
.t{margin-left:auto;display:flex;align-items:center}
.c{display:flex;flex-direction:column;align-items:center;line-height:18px;width:56px;margin:0 15px 0 14px;height:36px}
.s{width:1px;height:40px;background:#b4bcbd;margin:0 4px 0 11px}
`, `<task-button icon="win" s="16" style="margin-right:8px"></task-button><task-button icon="wsearch" s="22" style="margin-right:10px"></task-button><task-button on icon="files" s="22"></task-button><task-button on icon="chrome" s="26" style="--nudge:3px"></task-button><task-button on icon="vscode"></task-button><task-button on icon="teams" s="27" style="--nudge:2px"></task-button><task-button on icon="discord" s="26" style="--nudge:3px"></task-button>
<div class="t"><ui-icon name="up" w="12"></ui-icon><ui-icon name="cam" w="12" style="margin-left:14px"></ui-icon><ui-icon name="cloud" w="17" style="margin-left:9px"></ui-icon><ui-icon name="net" w="17" style="margin-left:8px"></ui-icon><ui-icon name="sound" w="17" style="margin:0 11px 0 7px"></ui-icon><ui-label w="18">ESP</ui-label><div class="c"><ui-label w="27">00:06</ui-label><ui-label w="51">10/4/2025</ui-label></div><ui-icon name="notif" w="25" style="margin-left:1px"></ui-icon><div class="s"></div></div>`);

define('desktop-view', ':host{display:flex;flex-direction:column;width:1360px;height:768px;overflow:hidden;background:#2d363c}', '<tab-strip></tab-strip><address-bar></address-bar><bookmark-bar></bookmark-bar><moqups-app></moqups-app><task-bar></task-bar>');
</script>
</body>
</html>
